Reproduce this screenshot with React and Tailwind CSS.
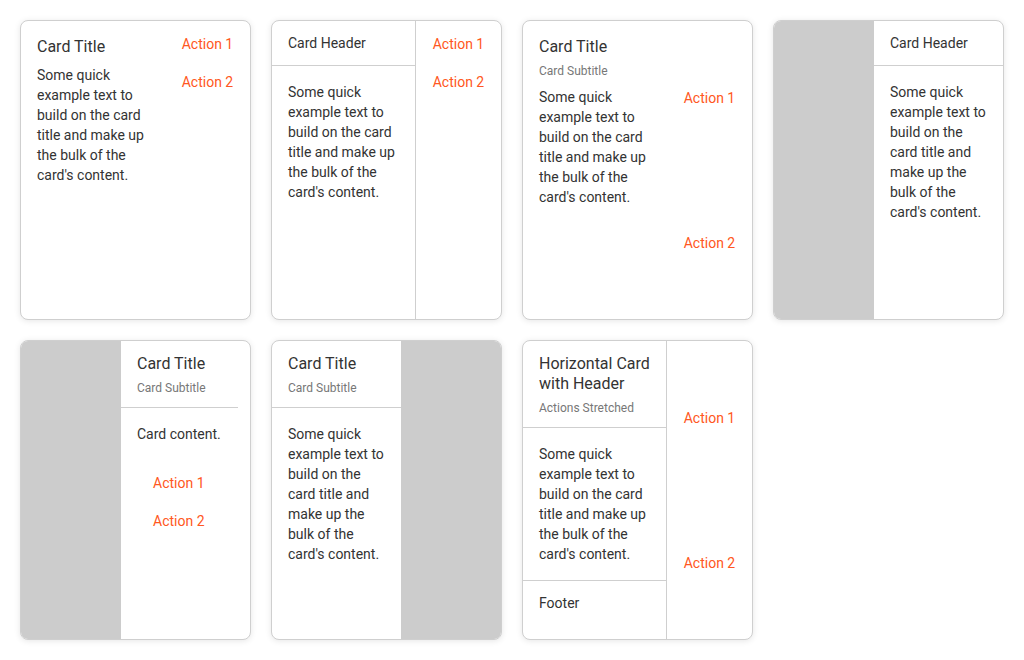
const font = { fontFamily: "Roboto, 'Noto Sans', sans-serif" };

const body =
  "Some quick example text to build on the card title and make up the bulk of the card's content.";

function Card({ children, className = "" }) {
  return (
    <div
      className={
        "h-[300px] rounded-lg border border-[#cfcfcf] bg-white overflow-hidden flex shadow-[0_1px_6px_rgba(0,0,0,0.10)] " +
        className
      }
    >
      {children}
    </div>
  );
}

function Action({ children, stretch }) {
  return (
    <button
      className={
        "text-sm text-[#ff5722] leading-5 flex items-center justify-center " +
        (stretch ? "flex-1" : "h-[38px]")
      }
    >
      {children}
    </button>
  );
}

function Actions({ border, stretch }) {
  return (
    <div
      className={
        "flex flex-col py-1 shrink-0 " +
        (border ? "w-[86px] border-l border-[#cfcfcf]" : "w-[85px]")
      }
    >
      <Action stretch={stretch}>Action 1</Action>
      <Action stretch={stretch}>Action 2</Action>
    </div>
  );
}

const Title = ({ children }) => (
  <div className="text-base leading-5 text-[#333]">{children}</div>
);
const Subtitle = ({ children }) => (
  <div className="mt-[6px] text-xs leading-4 text-[#777]">{children}</div>
);
const Text = ({ children, className = "" }) => (
  <p className={"text-sm leading-5 text-[#333] " + className}>{children}</p>
);

export default function App() {
  return (
    <div className="min-h-screen bg-white p-5" style={font}>
      <div className="grid grid-cols-4 gap-5">
        {/* 1 */}
        <Card>
          <div className="flex-1 min-w-0 pl-4 pt-4">
            <Title>Card Title</Title>
            <Text className="mt-2">{body}</Text>
          </div>
          <Actions />
        </Card>

        {/* 2 */}
        <Card>
          <div className="flex-1 min-w-0">
            <div className="px-4 py-3 border-b border-[#cfcfcf] text-sm leading-5 text-[#333]">
              Card Header
            </div>
            <Text className="p-4">{body}</Text>
          </div>
          <Actions border />
        </Card>

        {/* 3 */}
        <Card>
          <div className="flex-1 min-w-0 pl-4 pt-4">
            <Title>Card Title</Title>
            <Subtitle>Card Subtitle</Subtitle>
            <Text className="mt-2">{body}</Text>
          </div>
          <Actions stretch />
        </Card>

        {/* 4 */}
        <Card>
          <div className="w-[100px] shrink-0 bg-[#cccccc]" />
          <div className="flex-1 min-w-0">
            <div className="px-4 py-3 border-b border-[#cfcfcf] text-sm leading-5 text-[#333]">
              Card Header
            </div>
            <Text className="p-4">{body}</Text>
          </div>
        </Card>

        {/* 5 */}
        <Card>
          <div className="w-[100px] shrink-0 bg-[#cccccc]" />
          <div className="flex-1 min-w-0">
            <div className="mr-3 pl-4 pt-[13px] pb-[11px] border-b border-[#cfcfcf]">
              <Title>Card Title</Title>
              <Subtitle>Card Subtitle</Subtitle>
            </div>
            <Text className="px-4 pt-4">Card content.</Text>
            <div className="mt-4 pl-4 py-1 flex flex-col items-start">
              <button className="h-[38px] px-4 text-sm leading-5 text-[#ff5722]">Action 1</button>
              <button className="h-[38px] px-4 text-sm leading-5 text-[#ff5722]">Action 2</button>
            </div>
          </div>
        </Card>

        {/* 6 */}
        <Card>
          <div className="flex-1 min-w-0">
            <div className="px-4 pt-[13px] pb-[11px] border-b border-[#cfcfcf]">
              <Title>Card Title</Title>
              <Subtitle>Card Subtitle</Subtitle>
            </div>
            <Text className="p-4">{body}</Text>
          </div>
          <div className="w-[100px] shrink-0 bg-[#cccccc]" />
        </Card>

        {/* 7 */}
        <Card>
          <div className="flex-1 min-w-0">
            <div className="px-4 pt-[13px] pb-[11px] border-b border-[#cfcfcf]">
              <Title>Horizontal Card with Header</Title>
              <Subtitle>Actions Stretched</Subtitle>
            </div>
            <Text className="p-4 border-b border-[#cfcfcf]">{body}</Text>
            <div className="px-4 py-3 text-sm leading-5 text-[#333]">Footer</div>
          </div>
          <Actions border stretch />
        </Card>
      </div>
    </div>
  );
}
